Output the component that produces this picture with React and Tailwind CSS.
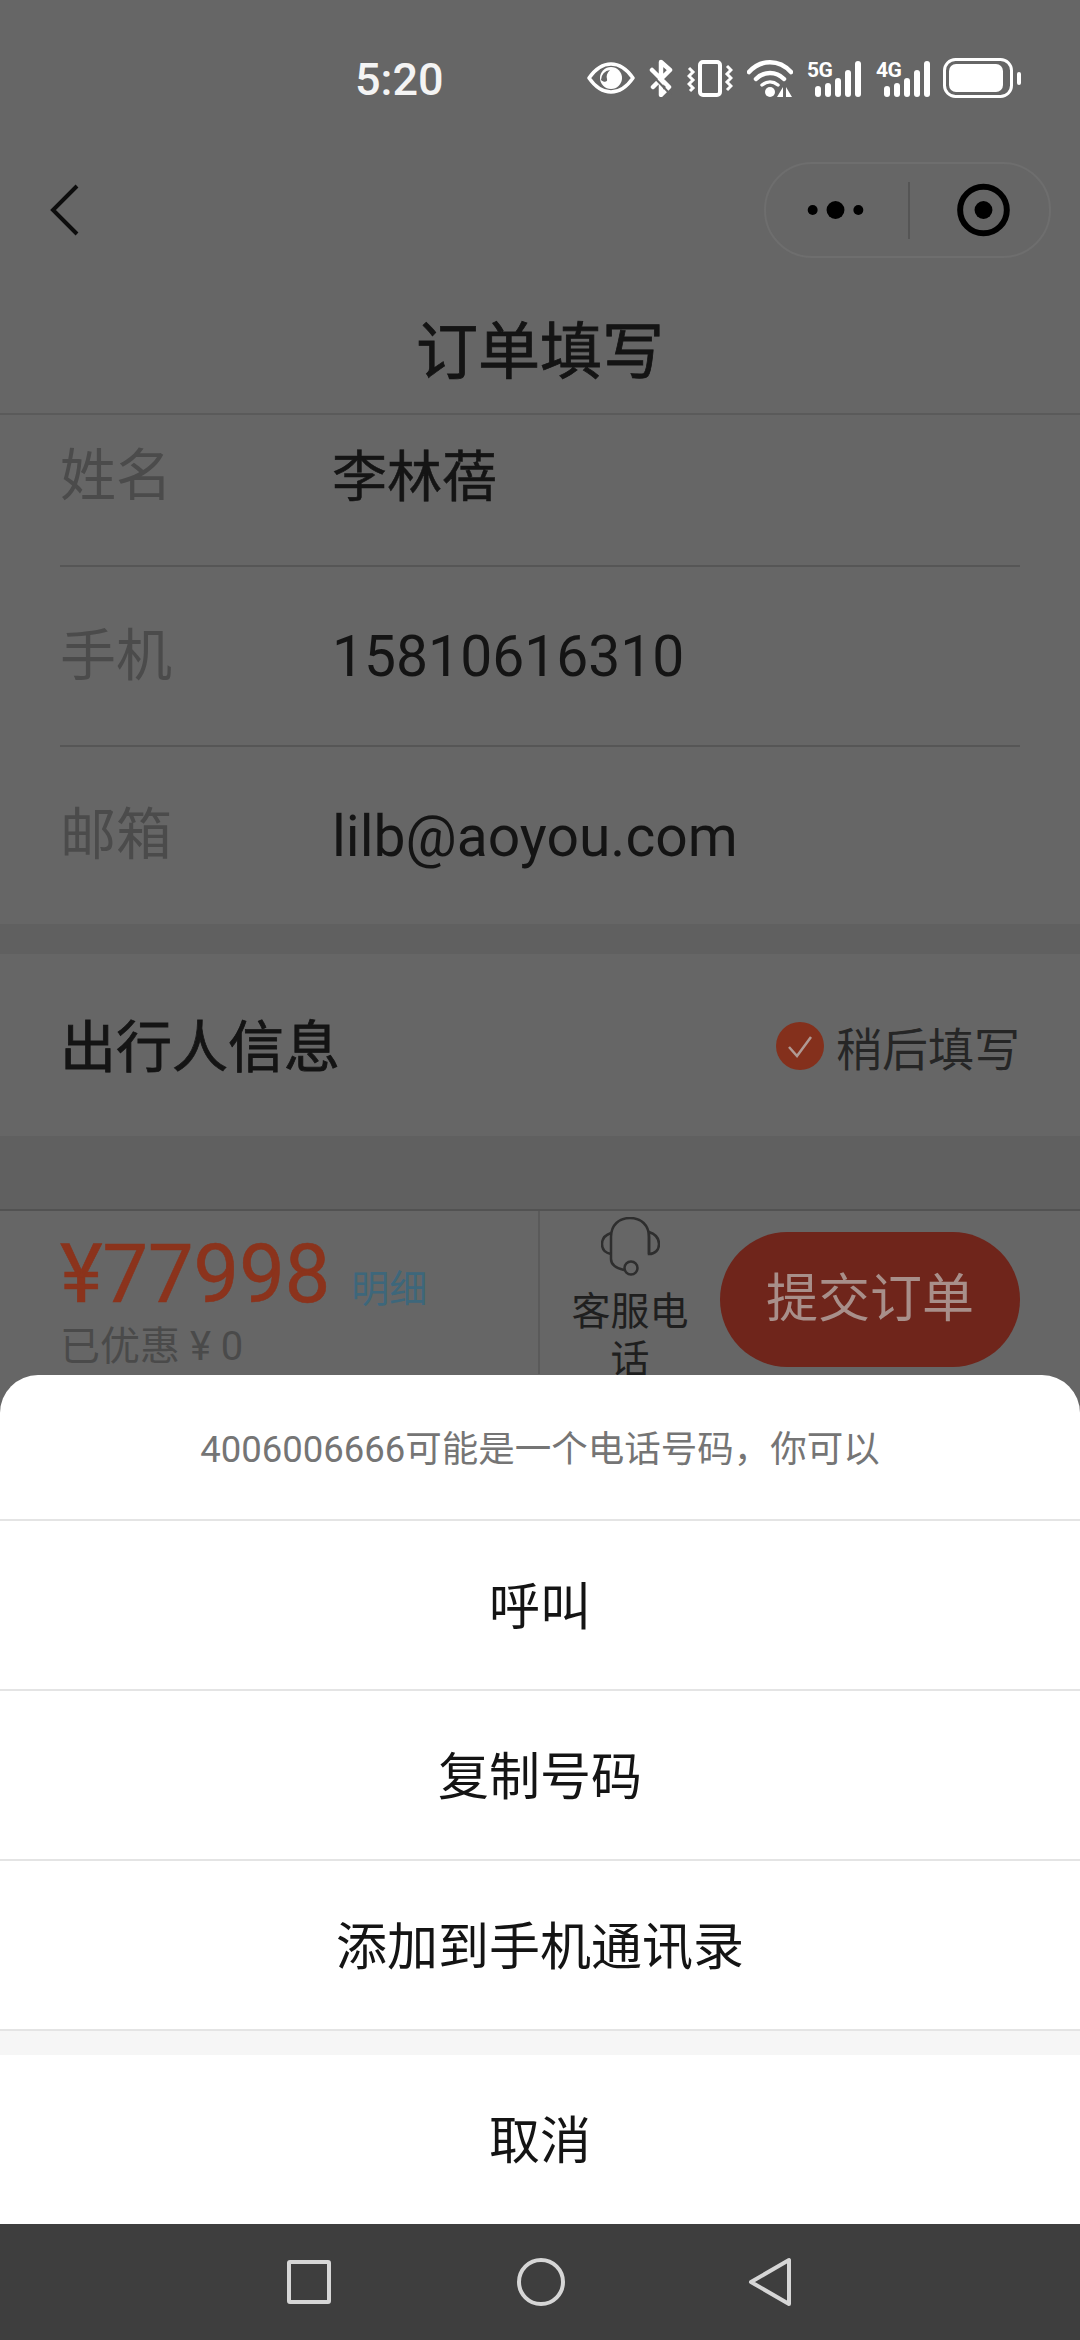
import React from "react";

const cjk = { fontFamily: 'Roboto, "Noto Sans CJK SC", sans-serif' };

function EyeIcon() {
  return (
    <svg width="48" height="32" viewBox="0 0 48 32">
      <path d="M2 16C9 6 16 2 24 2s15 4 22 14c-7 10-14 14-22 14S9 26 2 16Z" fill="none" stroke="#fff" strokeWidth="3.5" strokeLinejoin="round" />
      <circle cx="24" cy="16" r="11" fill="#fff" />
      <path d="M14 18a10 10 0 0 1 9-10c-3 3-4 6-3 9 1 3-3 4-6 1Z" fill="#666" />
    </svg>
  );
}

function BluetoothIcon() {
  return (
    <svg width="24" height="38" viewBox="0 0 24 38">
      <path d="M3 11 20 28 12 36V3l9 8L4 28" fill="none" stroke="#fff" strokeWidth="4.5" strokeLinecap="round" strokeLinejoin="round" />
      <path d="M2 15 22 36" stroke="#666" strokeWidth="2" />
    </svg>
  );
}

function VibrateIcon() {
  return (
    <svg width="46" height="38" viewBox="0 0 46 38">
      <rect x="13" y="3" width="20" height="33" rx="3" fill="none" stroke="#fff" strokeWidth="4" />
      <path d="M2 9l4 4-4 4 4 4-4 4 4 4-3 3" fill="none" stroke="#fff" strokeWidth="3" />
      <path d="M40 7l4 4-4 4 4 4-4 4 4 4-4 4" fill="none" stroke="#fff" strokeWidth="3" />
    </svg>
  );
}

function WifiIcon() {
  return (
    <svg width="46" height="38" viewBox="0 0 46 38">
      <path d="M2 13C14 0 32 0 44 13" fill="none" stroke="#fff" strokeWidth="4.5" strokeLinecap="round" />
      <path d="M9 20c8-8 20-8 28 0" fill="none" stroke="#fff" strokeWidth="4.5" strokeLinecap="round" />
      <path d="M15 26c5-4 11-4 16 0" fill="none" stroke="#fff" strokeWidth="3.5" strokeLinecap="round" />
      <circle cx="23" cy="33" r="5" fill="#fff" />
      <path d="M36 28v10h-6ZM39 28v10h6Z" fill="#fff" />
    </svg>
  );
}

function SignalIcon({ label }) {
  return (
    <div className="relative w-[54px] h-[38px]">
      <span className="absolute left-0 top-0 text-[21px] font-bold leading-[22px] tracking-tight text-white" style={{ fontFamily: "Roboto, sans-serif" }}>
        {label}
      </span>
      <svg width="54" height="38" viewBox="0 0 54 38" className="absolute left-0 top-0">
        <rect x="8" y="27" width="6" height="11" rx="3" fill="#fff" />
        <rect x="18" y="24" width="6" height="14" rx="3" fill="#fff" />
        <rect x="28" y="19" width="6" height="19" rx="3" fill="#fff" />
        <rect x="38" y="11" width="6" height="27" rx="3" fill="#fff" />
        <rect x="48" y="2" width="6" height="36" rx="3" fill="#fff" />
      </svg>
    </div>
  );
}

function BatteryIcon() {
  return (
    <svg width="78" height="40" viewBox="0 0 78 40">
      <rect x="1.5" y="1.5" width="67" height="37" rx="11" fill="none" stroke="#fff" strokeWidth="3" />
      <rect x="6" y="6" width="54" height="28" rx="7" fill="#fff" />
      <rect x="74" y="14" width="4" height="13" rx="2" fill="#fff" />
    </svg>
  );
}

function FormRow({ label, value, valueSize, className }) {
  return (
    <div className={`flex items-center mx-[60px] shrink-0 ${className}`}>
      <span className="w-[272px] text-[56px] leading-[64px] text-[#4b4b4b] -mt-[3px]">{label}</span>
      <span className={`leading-[64px] text-[#141414] ${valueSize}`}>{value}</span>
    </div>
  );
}

function SheetRow({ children, className = "" }) {
  return (
    <div className={`flex items-center justify-center text-[51px] text-[#141414] pt-[6px] shrink-0 ${className}`}>{children}</div>
  );
}

export default function App() {
  return (
    <div className="w-[1080px] h-[2340px] flex flex-col overflow-hidden bg-[#666666]" style={cjk}>
      {/* dimmed page behind the sheet */}
      <div className="h-[1375px] shrink-0 overflow-hidden flex flex-col">
        {/* status bar */}
        <div className="h-[162px] shrink-0 flex items-start pt-[58px] pl-[355px] pr-[59px]">
          <span className="text-[45px] leading-[44px] font-medium text-[#f4f4f4]" style={{ fontFamily: "Roboto, sans-serif" }}>5:20</span>
          <div className="ml-auto flex items-center h-[40px]">
            <EyeIcon />
            <div className="ml-[14px]"><BluetoothIcon /></div>
            <div className="ml-[14px]"><VibrateIcon /></div>
            <div className="ml-[14px]"><WifiIcon /></div>
            <div className="ml-[14px]"><SignalIcon label="5G" /></div>
            <div className="ml-[15px]"><SignalIcon label="4G" /></div>
            <div className="ml-[13px]"><BatteryIcon /></div>
          </div>
        </div>

        {/* nav with capsule */}
        <div className="h-[96px] shrink-0 flex items-center pl-[50px] pr-[29px]">
          <svg width="30" height="52" viewBox="0 0 30 52">
            <path d="M27 2 3 26l24 24" fill="none" stroke="#0d0d0d" strokeWidth="4" />
          </svg>
          <div className="ml-auto w-[287px] h-[96px] flex items-center rounded-full border-2 border-[#6e6e6e]">
            <svg width="143" height="60" viewBox="0 0 143 60">
              <circle cx="47" cy="30" r="5" fill="#000" />
              <circle cx="70" cy="30" r="9" fill="#000" />
              <circle cx="93" cy="30" r="5" fill="#000" />
            </svg>
            <div className="w-[2px] h-[57px] bg-[#555555]" />
            <svg width="140" height="60" viewBox="0 0 140 60">
              <circle cx="74" cy="30" r="23.5" fill="none" stroke="#000" strokeWidth="6" />
              <circle cx="74" cy="30" r="9" fill="#000" />
            </svg>
          </div>
        </div>

        {/* title */}
        <div className="h-[157px] shrink-0 flex items-center justify-center pt-[34px] border-b-2 border-[#5a5a5a] text-[62px] leading-[70px] [-webkit-text-stroke:0.8px_#141414] text-[#141414]">
          订单填写
        </div>

        {/* contact form */}
        <FormRow label="姓名" value="李林蓓" valueSize="text-[55px] [-webkit-text-stroke:0.5px_#141414]" className="h-[152px] pb-[26px] border-b-2 border-[#565656]" />
        <FormRow label="手机" value="15810616310" valueSize="text-[57px]" className="h-[180px] pt-[2px] border-b-2 border-[#565656]" />
        <FormRow label="邮箱" value="lilb@aoyou.com" valueSize="text-[57px]" className="h-[177px] pt-[2px]" />

        <div className="h-[30px] shrink-0 bg-[#606060]" />

        {/* traveller section */}
        <div className="h-[182px] shrink-0 flex items-center pl-[60px] pr-[60px] pt-[6px]">
          <span className="text-[56px] leading-[66px] [-webkit-text-stroke:0.8px_#141414] text-[#141414]">出行人信息</span>
          <svg width="48" height="48" viewBox="0 0 48 48" className="ml-auto -mt-[4px]">
            <circle cx="24" cy="24" r="24" fill="#84301c" />
            <path d="M13 25l8 9 14-19" fill="none" stroke="#b09a94" strokeWidth="2.5" />
          </svg>
          <span className="ml-[12px] mt-[4px] text-[46px] leading-[54px] text-[#262626]">稍后填写</span>
        </div>

        <div className="h-[73px] shrink-0 bg-[#606060]" />

        {/* price bar */}
        <div className="h-[165px] shrink-0 flex border-t-2 border-[#525252]">
          <div className="w-[540px] shrink-0 pl-[60px] border-r-2 border-[#5a5a5a]">
            <div className="flex items-baseline mt-[20px]">
              <span className="text-[81px] leading-[88px] [-webkit-text-stroke:0.6px_#8b331c] text-[#8b331c]">¥77998</span>
              <span className="ml-[21px] text-[38px] leading-[48px] text-[#3d677b]">明细</span>
            </div>
            <div className="text-[40px] leading-[48px] text-[#4a4a4a] mt-[4px]">已优惠 ¥ 0</div>
          </div>
          <div className="flex-1 flex flex-col items-center">
            <svg width="59" height="59" viewBox="0 0 59 59" className="mt-[6px] shrink-0">
              <path d="M48 37V20C48 8 40 1 29 1 18 1 10 8 10 20V42c0 5 4 9 13 11" fill="none" stroke="#2e2e2e" strokeWidth="2.5" />
              <path d="M10 16C4 18 1 22 1 27s3 9 9 10" fill="none" stroke="#2e2e2e" strokeWidth="2.5" />
              <path d="M48 15c6 2 10 6 10 12s-4 10-10 10Z" fill="none" stroke="#2e2e2e" strokeWidth="2.5" />
              <circle cx="30" cy="51" r="6.5" fill="none" stroke="#2e2e2e" strokeWidth="2.5" />
            </svg>
            <div className="w-[120px] text-center text-[39px] leading-[48px] text-[#1f1f1f] mt-[12px]">客服电话</div>
          </div>
          <div className="w-[300px] h-[135px] mt-[21px] mr-[60px] shrink-0 flex items-center justify-center rounded-full bg-[#6f251b] text-[52px] text-[#a88f8a]">
            提交订单
          </div>
        </div>
      </div>

      {/* action sheet */}
      <div className="flex-1 flex flex-col rounded-t-[38px] bg-white overflow-hidden">
        <div className="h-[146px] shrink-0 flex items-center justify-center pt-[6px] border-b-2 border-[#e4e4e4] text-[36.5px] text-[#757575]">
          4006006666可能是一个电话号码，你可以
        </div>
        <SheetRow className="h-[170px] border-b-2 border-[#e4e4e4]">呼叫</SheetRow>
        <SheetRow className="h-[170px] border-b-2 border-[#e4e4e4]">复制号码</SheetRow>
        <SheetRow className="h-[170px] border-b-2 border-[#e4e4e4]">添加到手机通讯录</SheetRow>
        <div className="h-[24px] shrink-0 bg-[#f6f6f6]" />
        <SheetRow className="flex-1">取消</SheetRow>
      </div>

      {/* android nav */}
      <div className="h-[116px] shrink-0 flex items-center bg-[#3e3e3e] pl-[287px]">
        <div className="w-[44px] h-[44px] rounded-[3px] border-4 border-[#d6d6d6]" />
        <div className="ml-[186px] w-[48px] h-[48px] rounded-full border-4 border-[#d6d6d6]" />
        <svg width="44" height="50" viewBox="0 0 44 50" className="ml-[183px]">
          <path d="M41 3v44L3 25Z" fill="none" stroke="#d6d6d6" strokeWidth="4" strokeLinejoin="round" />
        </svg>
      </div>
    </div>
  );
}
